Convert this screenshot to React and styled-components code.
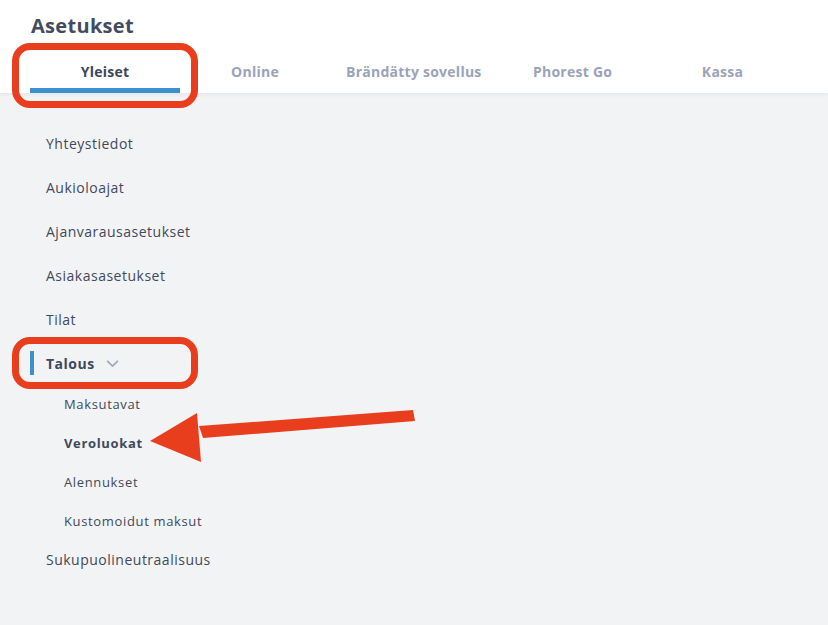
import React from "react";
import styled, { createGlobalStyle } from "styled-components";

const Global = createGlobalStyle`
  html, body { margin: 0; padding: 0; background: #f2f3f5; }
  body { font-family: "Open Sans", "Liberation Sans", sans-serif; width: 828px; height: 625px; overflow: hidden; }
`;

const Page = styled.div`
  position: relative;
  width: 828px;
  height: 625px;
  background: #f2f3f5;
`;

const Header = styled.header`
  background: #ffffff;
  height: 93px;
  box-shadow: 0 1px 4px rgba(40, 50, 70, 0.08);
  display: flex;
  flex-direction: column;
  padding-left: 30px;
  box-sizing: border-box;
  position: relative;
  z-index: 1;
`;

const Title = styled.h1`
  margin: 12px 0 0 1px;
  font-size: 20px;
  line-height: 28px;
  font-weight: 700;
  color: #434c5f;
  letter-spacing: 0.3px;
`;

const Tabs = styled.nav`
  display: flex;
  margin-top: 18px;
  height: 35px;
`;

const Tab = styled.div`
  min-width: 150px;
  padding: 0 16px;
  box-sizing: border-box;
  text-align: center;
  font-size: 14px;
  font-weight: 700;
  line-height: 20px;
  letter-spacing: 0.25px;
  padding-top: 4px;
  color: ${(p) => (p.$active ? "#3d4659" : "#9aa3b8")};
  border-bottom: 5px solid ${(p) => (p.$active ? "#3a91cd" : "transparent")};
`;

const Sidebar = styled.ul`
  list-style: none;
  margin: 0;
  padding: 28px 0 0 30px;
`;

const SubList = styled.ul`
  list-style: none;
  margin: -1px 0 -3px 0;
  padding: 0;
`;

const Item = styled.li`
  position: relative;
  height: ${(p) => (p.$sub ? 39 : 44)}px;
  display: flex;
  align-items: center;
  padding-left: ${(p) => (p.$sub ? 34 : 16)}px;
  font-size: ${(p) => (p.$sub ? 13 : 14)}px;
  letter-spacing: ${(p) => (p.$sub ? 0.65 : 0.5)}px;
  font-weight: ${(p) => (p.$bold ? 700 : 400)};
  color: #3f495c;
  gap: 10px;
`;

const ActiveBar = styled.span`
  position: absolute;
  left: 0;
  top: 10px;
  width: 4px;
  height: 24px;
  background: #3a91cd;
`;

const Chevron = styled.svg`
  width: 15px;
  height: 15px;
  margin-top: 1px;
`;

const Highlight = styled.div`
  position: absolute;
  left: ${(p) => p.$x}px;
  top: ${(p) => p.$y}px;
  width: ${(p) => p.$w}px;
  height: ${(p) => p.$h}px;
  border: 7px solid #e93e1d;
  border-radius: 18px;
  box-sizing: border-box;
  z-index: 2;
`;

const ArrowSvg = styled.svg`
  position: absolute;
  left: 0;
  top: 0;
  z-index: 2;
  pointer-events: none;
`;

const main = ["Yhteystiedot", "Aukioloajat", "Ajanvarausasetukset", "Asiakasasetukset", "Tilat"];
const subs = [
  { t: "Maksutavat" },
  { t: "Veroluokat", b: true },
  { t: "Alennukset" },
  { t: "Kustomoidut maksut" },
];
const tabs = ["Yleiset", "Online", "Brändätty sovellus", "Phorest Go", "Kassa"];

export default function App() {
  return (
    <Page>
      <Global />
      <Header>
        <Title>Asetukset</Title>
        <Tabs>
          {tabs.map((t, i) => (
            <Tab key={t} $active={i === 0}>{t}</Tab>
          ))}
        </Tabs>
      </Header>
      <Sidebar>
        {main.map((m) => (
          <Item key={m}>{m}</Item>
        ))}
        <Item $bold>
          <ActiveBar />
          Talous
          <Chevron viewBox="0 0 14 14" fill="none">
            <path d="M2.5 5l4.5 4.5L11.5 5" stroke="#a3abbd" strokeWidth="1.8" strokeLinecap="round" strokeLinejoin="round" />
          </Chevron>
        </Item>
        <li>
          <SubList>
            {subs.map((s) => (
              <Item key={s.t} $sub $bold={s.b}>{s.t}</Item>
            ))}
          </SubList>
        </li>
        <Item>Sukupuolineutraalisuus</Item>
      </Sidebar>
      <Highlight $x={12} $y={43} $w={186} $h={65} />
      <Highlight $x={12} $y={337} $w={186} $h={52} />
      <ArrowSvg width="828" height="625" viewBox="0 0 828 625">
        <polygon points="413,410 415,421 203,438 201,432 199,426" fill="#e93e1d" />
        <polygon points="150,441 197,413 201,462" fill="#e93e1d" />
      </ArrowSvg>
    </Page>
  );
}
